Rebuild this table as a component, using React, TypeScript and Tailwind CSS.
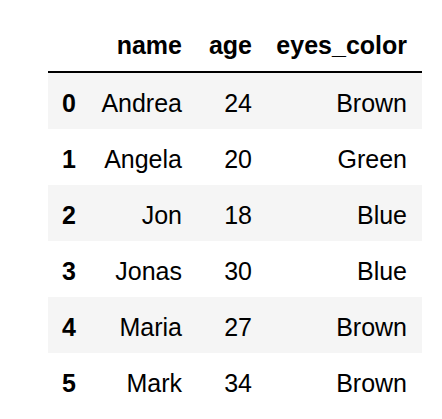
import React from "react";

const rows: [string, string, string, string][] = [
  ["0", "Andrea", "24", "Brown"],
  ["1", "Angela", "20", "Green"],
  ["2", "Jon", "18", "Blue"],
  ["3", "Jonas", "30", "Blue"],
  ["4", "Maria", "27", "Brown"],
  ["5", "Mark", "34", "Brown"],
];

export default function App() {
  return (
    <div
      className="w-[442px] h-[419px] bg-white text-black overflow-hidden"
      style={{ fontFamily: '"Liberation Sans", Arial, sans-serif' }}
    >
      <div className="pt-[15px] pl-[48px]">
        <table className="table-fixed w-[374px] border-separate border-spacing-0 text-[25px] leading-[29px]">
          <colgroup>
            <col className="w-[42px]" />
            <col className="w-[106px]" />
            <col className="w-[70px]" />
            <col className="w-[156px]" />
          </colgroup>
          <thead>
            <tr>
              <th className="h-[58px] border-b-2 border-black p-0"></th>
              <th className="h-[58px] border-b-2 border-black pt-[16px] pb-0 pl-0 pr-[14px] align-top text-right font-bold">name</th>
              <th className="h-[58px] border-b-2 border-black pt-[16px] pb-0 pl-0 pr-[14px] align-top text-right font-bold">age</th>
              <th className="h-[58px] border-b-2 border-black pt-[16px] pb-0 pl-0 pr-[15px] align-top text-right font-bold">eyes_color</th>
            </tr>
          </thead>
          <tbody>
            {rows.map((r, i) => (
              <tr key={r[0]} className={i % 2 === 0 ? "bg-[#f5f5f5]" : "bg-white"}>
                <th className="h-[56px] pt-[16px] pb-0 pl-[14px] pr-0 align-top text-left font-bold">{r[0]}</th>
                <td className="h-[56px] pt-[16px] pb-0 pl-0 pr-[14px] align-top text-right">{r[1]}</td>
                <td className="h-[56px] pt-[16px] pb-0 pl-0 pr-[14px] align-top text-right">{r[2]}</td>
                <td className="h-[56px] pt-[16px] pb-0 pl-0 pr-[15px] align-top text-right">{r[3]}</td>
              </tr>
            ))}
          </tbody>
        </table>
      </div>
    </div>
  );
}
